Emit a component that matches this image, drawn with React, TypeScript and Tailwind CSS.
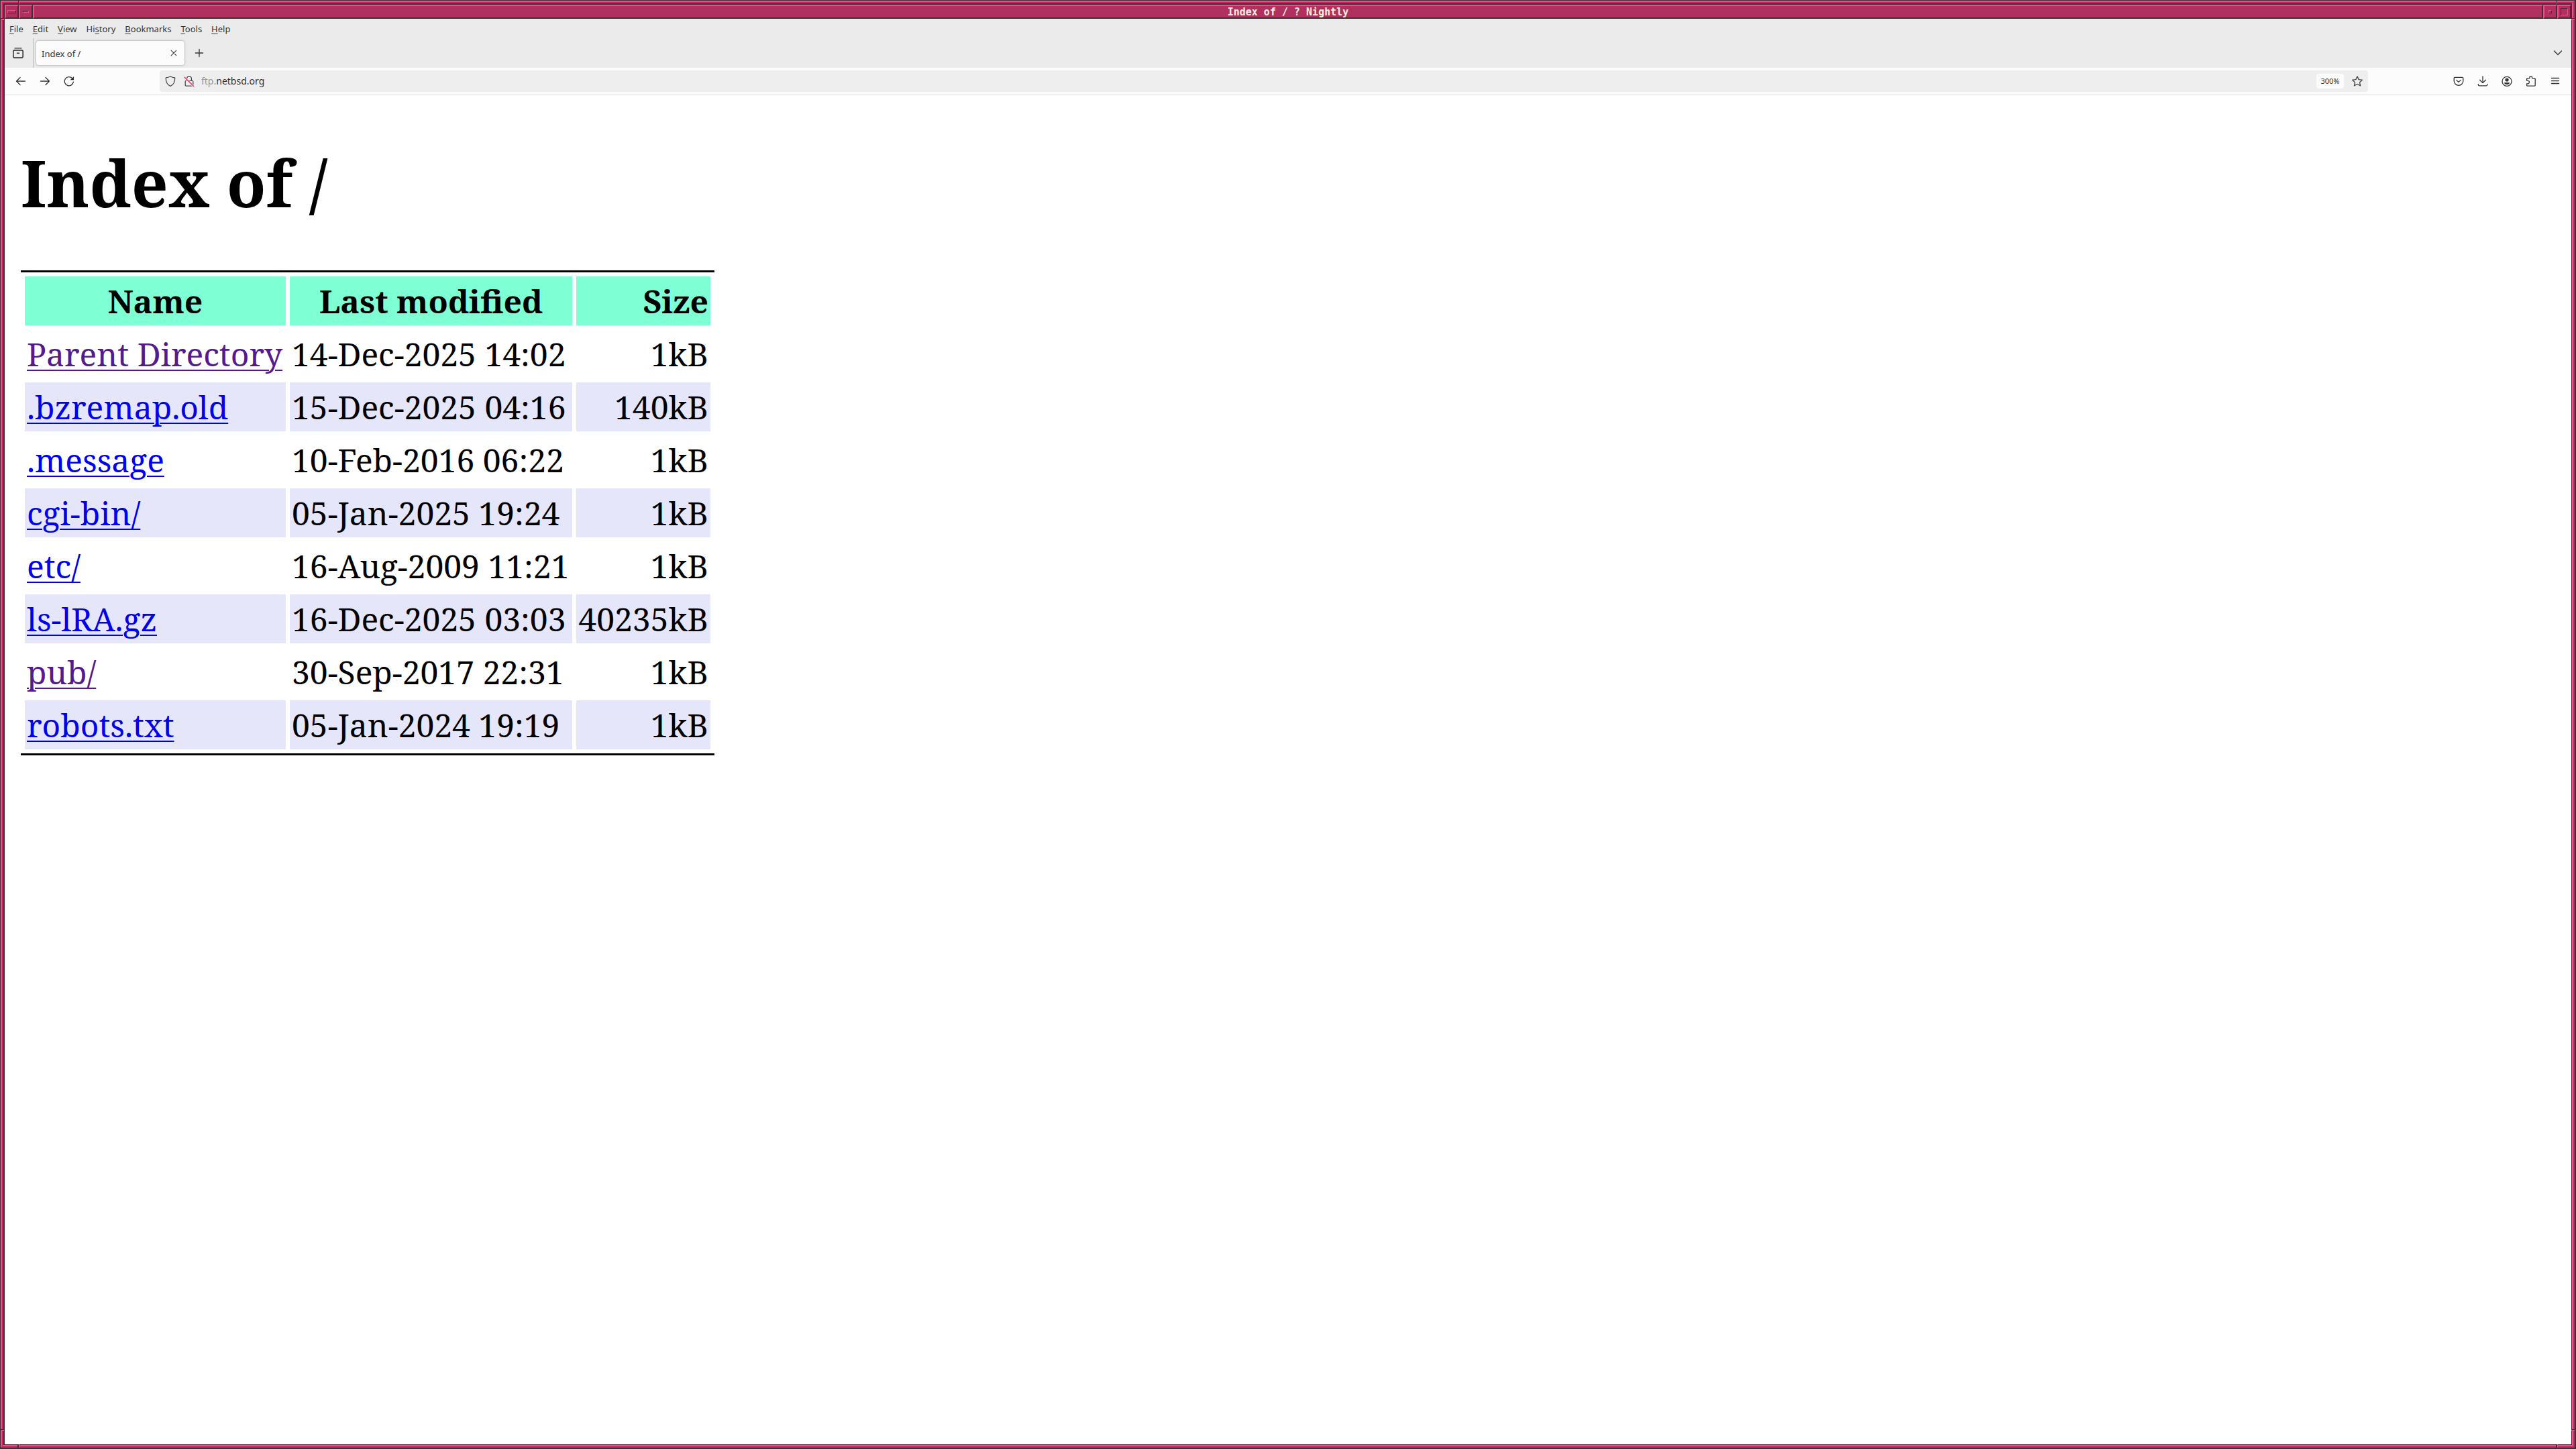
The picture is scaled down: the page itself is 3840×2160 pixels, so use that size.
import React from 'react';

interface Entry {
  name: string;
  modified: string;
  size: string;
  visited?: boolean;
}

const entries: Entry[] = [
  { name: 'Parent Directory', modified: '14-Dec-2025 14:02', size: '1kB', visited: true },
  { name: '.bzremap.old', modified: '15-Dec-2025 04:16', size: '140kB' },
  { name: '.message', modified: '10-Feb-2016 06:22', size: '1kB' },
  { name: 'cgi-bin/', modified: '05-Jan-2025 19:24', size: '1kB' },
  { name: 'etc/', modified: '16-Aug-2009 11:21', size: '1kB' },
  { name: 'ls-lRA.gz', modified: '16-Dec-2025 03:03', size: '40235kB' },
  { name: 'pub/', modified: '30-Sep-2017 22:31', size: '1kB', visited: true },
  { name: 'robots.txt', modified: '05-Jan-2024 19:19', size: '1kB' },
];

// label split around the underlined access key
const menus = [
  ['', 'F', 'ile'],
  ['', 'E', 'dit'],
  ['', 'V', 'iew'],
  ['Hi', 's', 'tory'],
  ['', 'B', 'ookmarks'],
  ['', 'T', 'ools'],
  ['', 'H', 'elp'],
];

interface ButtonProps {
  label: string;
  children: React.ReactNode;
}

const Icon = ({ children }: { children: React.ReactNode }) => (
  <svg
    viewBox="0 0 16 16"
    className="h-4 w-4"
    fill="none"
    stroke="currentColor"
    strokeWidth="1.3"
    strokeLinecap="round"
    strokeLinejoin="round"
    aria-hidden="true"
  >
    {children}
  </svg>
);

const ToolButton = ({ label, children }: ButtonProps) => (
  <button aria-label={label} className="flex h-8 w-9 items-center justify-center">
    {children}
  </button>
);

const FrameButton = ({ label, children }: ButtonProps) => (
  <button
    aria-label={label}
    className="flex h-[21px] w-[21px] shrink-0 items-center justify-center border-2 border-t-[#f04e88] border-r-[#4c2837] border-b-[#4c2837] border-l-[#f04e88]"
  >
    {children}
  </button>
);

const TitleBar = () => (
  <div className="flex h-[21px] bg-[#b03060]">
    <FrameButton label="Window menu">
      <span className="h-[5px] w-[13px] border border-t-[#f04e88] border-r-[#4c2837] border-b-[#4c2837] border-l-[#f04e88]" />
    </FrameButton>
    <FrameButton label="Lower">
      <span className="h-[3px] w-[9px] border border-t-[#4c2837] border-r-[#f04e88] border-b-[#f04e88] border-l-[#4c2837]" />
    </FrameButton>
    <div className="flex-1 border-2 border-t-[#f04e88] border-r-[#4c2837] border-b-[#4c2837] border-l-[#f04e88] text-center font-['DejaVu_Sans_Mono',monospace] text-[15px] leading-[18px] font-bold text-[#ffeedd]">
      Index of / ? Nightly
    </div>
    <FrameButton label="Minimize">
      <span className="h-[5px] w-[5px] border border-t-[#f04e88] border-r-[#4c2837] border-b-[#4c2837] border-l-[#f04e88]" />
    </FrameButton>
    <FrameButton label="Maximize">
      <span className="h-[11px] w-[11px] border border-t-[#4c2837] border-r-[#f04e88] border-b-[#f04e88] border-l-[#4c2837]" />
    </FrameButton>
  </div>
);

// notches that mark the resize corners of the frame
const FrameNotches = () => (
  <>
    <span className="absolute top-0 left-[26px] h-[5px] w-[2px] border-l border-[#4c2837] bg-[#f04e88]" />
    <span className="absolute top-0 right-[26px] h-[5px] w-[2px] border-l border-[#4c2837] bg-[#f04e88]" />
    <span className="absolute bottom-0 left-[25px] h-[5px] w-[3px] border-l-2 border-[#4c2837] bg-[#f04e88]" />
    <span className="absolute right-[25px] bottom-0 h-[5px] w-[3px] border-l-2 border-[#4c2837] bg-[#f04e88]" />
    <span className="absolute top-[26px] left-0 h-[3px] w-[5px] border-t border-[#4c2837] bg-[#f04e88]" />
    <span className="absolute top-[26px] right-0 h-[3px] w-[5px] border-t border-[#4c2837] bg-[#f04e88]" />
    <span className="absolute bottom-[25px] left-0 h-[3px] w-[5px] border-t-2 border-[#4c2837] bg-[#f04e88]" />
    <span className="absolute right-0 bottom-[25px] h-[3px] w-[5px] border-t-2 border-[#4c2837] bg-[#f04e88]" />
  </>
);

const MenuBar = () => (
  <nav className="flex h-[29px] items-center text-[13px] leading-[18px]">
    {menus.map(([before, key, after]) => (
      <button key={before + key + after} className="px-[7px]">
        {before}
        <span className="underline underline-offset-2">{key}</span>
        {after}
      </button>
    ))}
  </nav>
);

const TabStrip = () => (
  <div className="flex h-[44px] items-center">
    <button
      aria-label="Firefox View"
      className="flex h-full w-[43px] items-center justify-center border-r border-[#b9b9b9] pr-[3px]"
    >
      <Icon>
        <path d="M3 .9h10" />
        <rect x=".8" y="3.9" width="14.4" height="11.2" rx="2" strokeWidth="1.6" />
        <path d="M6.5 8.2h3" strokeWidth="1.5" />
      </Icon>
    </button>
    <div className="ml-1 flex h-9 w-[221px] items-center justify-between rounded bg-[#fcfcfc] px-2 shadow-[0_0_3px_rgba(0,0,0,0.4)]">
      <span className="pt-[2px] text-[13px] leading-[18px]">Index of /</span>
      <button aria-label="Close tab">
        <Icon>
          <path d="M4.3 4.3l7.4 7.4M11.7 4.3l-7.4 7.4" strokeWidth="1.1" />
        </Icon>
      </button>
    </div>
    <button aria-label="New tab" className="ml-1 flex h-9 w-9 items-center justify-center">
      <Icon>
        <path d="M8 2.4v11.2M2.4 8h11.2" />
      </Icon>
    </button>
    <button aria-label="List all tabs" className="mr-[2px] ml-auto flex h-9 w-9 items-center justify-center">
      <Icon>
        <path d="M2.5 5L8 10.5 13.5 5" />
      </Icon>
    </button>
  </div>
);

const AddressBar = () => (
  <div className="flex h-8 flex-1 items-center rounded bg-[#eeeeee] px-2 text-[#4a4a4a]">
    <button aria-label="Tracking protection">
      <Icon>
        <path d="M8 .8c2 1.4 4.2 2 6.7 2.1C14.9 9 12.8 13.3 8 15.3 3.2 13.3 1.1 9 1.3 2.9 3.8 2.8 6 2.2 8 .8z" />
      </Icon>
    </button>
    <button aria-label="Connection not secure" className="ml-3">
      <Icon>
        <rect x="2.2" y="7.2" width="11.6" height="8" rx="1.5" />
        <path d="M4.6 7V4.2a3.4 3.4 0 0 1 6.8 0V7" />
        <path d="M1.2 2.2l13.5 13.3" stroke="#eeeeee" strokeWidth="3" />
        <path d="M1.2 2.2l13.5 13.3" stroke="#e22850" />
      </Icon>
    </button>
    <div className="relative ml-[10px] h-[22px] flex-1 text-[14px] leading-[22px]">
      <input
        aria-label="Address"
        defaultValue="ftp.netbsd.org"
        className="h-full w-full bg-transparent text-transparent outline-none"
      />
      {/* domain emphasis, drawn over the field */}
      <span className="pointer-events-none absolute inset-0 text-[#333333]" aria-hidden="true">
        <span className="text-[#999999]">ftp.</span>netbsd.org
      </span>
    </div>
    <button className="mr-3 h-[22px] w-[41px] rounded bg-[#fcfcfc] text-[11px] leading-[22px] text-[#333333]">
      300%
    </button>
    <button aria-label="Bookmark this page">
      <Icon>
        <path d="M8 .9l2.2 4.7 5.1.6-3.8 3.5 1.1 5.2L8 12.3l-4.6 2.6 1.1-5.2L.7 6.2l5.1-.6z" />
      </Icon>
    </button>
  </div>
);

const Toolbar = () => (
  <div className="flex h-[41px] items-center border-b border-[#dedede] bg-[#fcfcfc] px-[6px]">
    <div className="mr-[117px] flex">
      <ToolButton label="Back">
        <Icon>
          <path d="M14.5 8h-13M7 2.5L1.5 8 7 13.5" />
        </Icon>
      </ToolButton>
      <ToolButton label="Forward">
        <Icon>
          <path d="M1.5 8h13M9 2.5L14.5 8 9 13.5" />
        </Icon>
      </ToolButton>
      <ToolButton label="Reload">
        <Icon>
          <path d="M14.4 9.2A6.6 6.6 0 1 1 12.6 3.6" />
          <path d="M15 .9v5.3H9.7z" fill="currentColor" stroke="none" />
        </Icon>
      </ToolButton>
    </div>
    <AddressBar />
    <div className="ml-[117px] flex">
      <ToolButton label="Save to Pocket">
        <Icon>
          <path d="M2.6 2.3h10.8a1.4 1.4 0 0 1 1.4 1.4v3.8a6.8 6.8 0 0 1-13.6 0V3.7a1.4 1.4 0 0 1 1.4-1.4z" />
          <path d="M4.8 6.4L8 9.4l3.2-3" />
        </Icon>
      </ToolButton>
      <ToolButton label="Downloads">
        <Icon>
          <path d="M8 .8v9.7M3.6 6.3L8 10.6l4.4-4.3M1.3 12.3v1a1.5 1.5 0 0 0 1.5 1.5h10.4a1.5 1.5 0 0 0 1.5-1.5v-1" />
        </Icon>
      </ToolButton>
      <ToolButton label="Account">
        <Icon>
          <circle cx="8" cy="8.3" r="7" />
          <circle cx="8" cy="6" r="2.6" fill="currentColor" stroke="none" />
          <path d="M4 10h8c0 1.8-1.7 3.1-4 3.1S4 11.8 4 10z" fill="currentColor" stroke="none" />
        </Icon>
      </ToolButton>
      <ToolButton label="Extensions">
        <Icon>
          <path d="M1.6 7V4.7a1 1 0 0 1 1-1h3.2V2.6a1.9 1.9 0 0 1 3.8 0v1.1h3.6a1 1 0 0 1 1 1v9.4a1 1 0 0 1-1 1H2.6a1 1 0 0 1-1-1v-2.3h1.6a2 2 0 0 0 0-4.5z" />
        </Icon>
      </ToolButton>
      <ToolButton label="Open application menu">
        <Icon>
          <path d="M2.5 3.5h11M2.5 7.5h11M2.5 11.5h11" />
        </Icon>
      </ToolButton>
    </div>
  </div>
);

const DirectoryListing = () => (
  <main className="flex-1 bg-white px-6 pt-16 font-['Noto_Serif','DejaVu_Serif',serif] text-black">
    <h1 className="mb-[66px] text-[96px] leading-[131px] font-bold">Index of /</h1>
    <table className="border-separate border-spacing-[6px] border-y-[3px] border-black text-[48px] leading-[67px] whitespace-nowrap">
      <thead>
        <tr className="bg-[#7fffd4]">
          <th className="w-[389px] p-[3px] text-center font-bold">Name</th>
          <th className="w-[421px] p-[3px] text-center font-bold">Last modified</th>
          <th className="w-[200px] p-[3px] text-right font-bold">Size</th>
        </tr>
      </thead>
      <tbody>
        {entries.map((entry) => (
          <tr key={entry.name} className="even:bg-[#e6e6fa]">
            <td className="p-[3px]">
              <a
                href="#"
                className={`underline decoration-2 underline-offset-[5px] ${entry.visited ? 'text-[#551a8b]' : 'text-[#0000ee]'}`}
              >
                {entry.name}
              </a>
            </td>
            <td className="p-[3px]">{entry.modified}</td>
            <td className="p-[3px] text-right">{entry.size}</td>
          </tr>
        ))}
      </tbody>
    </table>
  </main>
);

const App = () => {
  return (
    <div className="relative flex min-h-screen flex-col border-t border-r-2 border-b-2 border-l border-[#4c2837]">
      <div className="flex flex-1 flex-col border-2 border-t-[#f04e88] border-r-[#b03060] border-b-[#b03060] border-l-[#f04e88]">
        <div className="flex flex-1 flex-col border-2 border-t-[#b03060] border-r-[#f04e88] border-b-[#f04e88] border-l-[#b03060]">
          <div className="flex flex-1 flex-col border-t-2 border-r border-b border-l-2 border-[#4c2837]">
            <TitleBar />
            <div className="bg-[#ebebeb] font-['Noto_Sans',sans-serif] text-[#333333]">
              <MenuBar />
              <TabStrip />
              <Toolbar />
            </div>
            <DirectoryListing />
          </div>
        </div>
      </div>
      <FrameNotches />
    </div>
  );
};

export default App;
